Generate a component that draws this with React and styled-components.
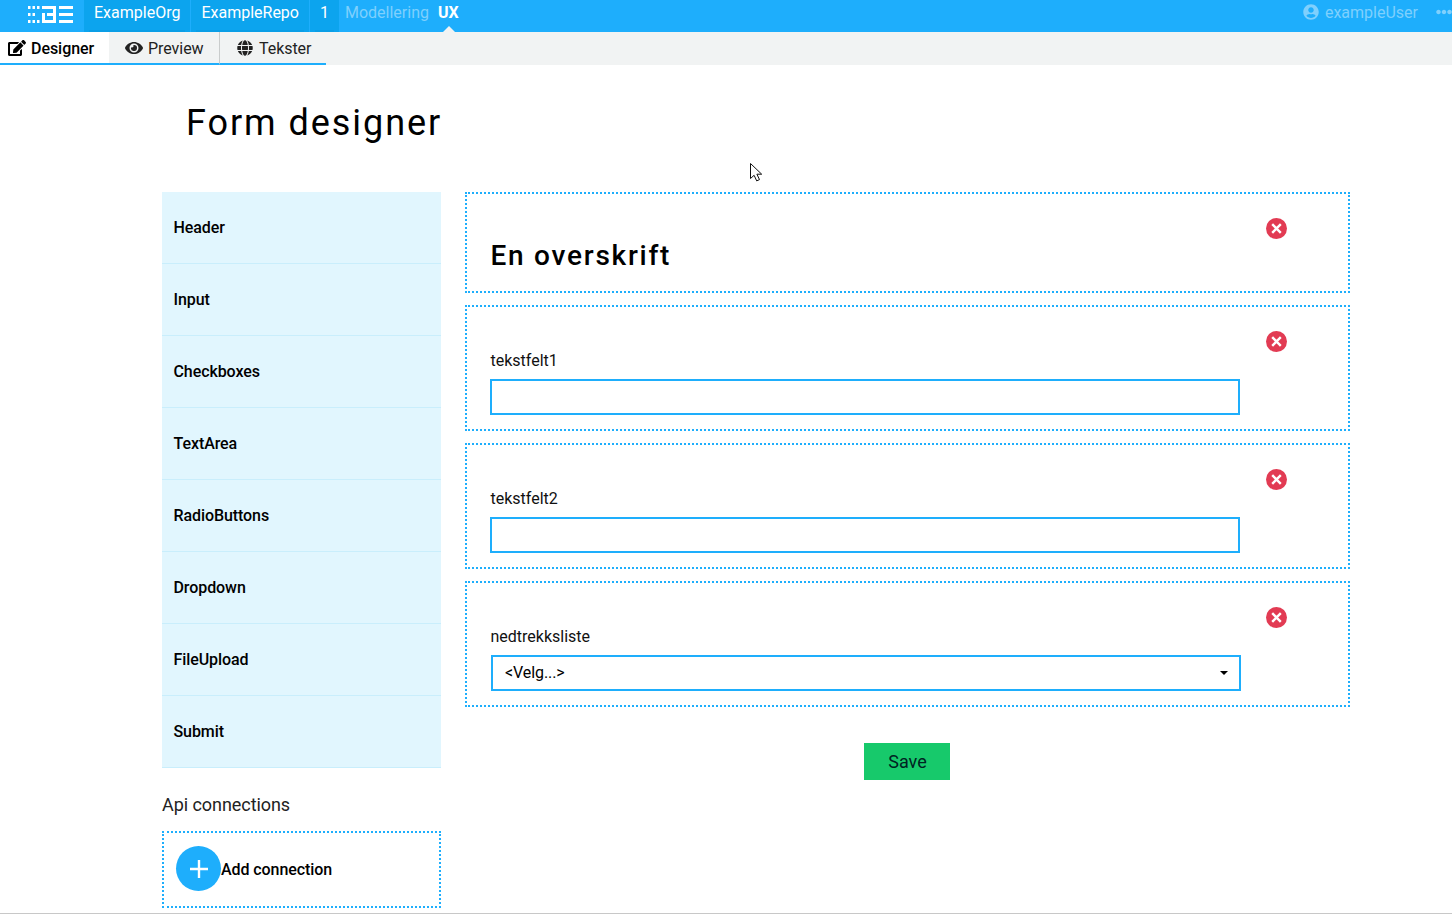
import React from "react"
import styled, { createGlobalStyle } from "styled-components"
import { FaEdit, FaEye, FaGlobe, FaUserCircle, FaEllipsisH } from "react-icons/fa"

const Global = createGlobalStyle`
  html, body { margin: 0; padding: 0; background: #fff; }
  body { font-family: Roboto, "Liberation Sans", sans-serif; color: #000; }
  * { box-sizing: border-box; }
`

const Page = styled.div`
  position: relative;
  height: 914px;
  overflow: hidden;
  border-bottom: 1px solid #c8c8c8;
`

const TopBar = styled.header`
  display: flex;
  align-items: stretch;
  height: 32px;
  background: #1eaefc;
  color: #fff;
  font-size: 16px;
  line-height: 26px;
`

const LogoWrap = styled.div`
  width: 84px;
  padding: 5px 0 0 27px;
`

const NavCrumb = styled.div`
  position: relative;
  padding: 0 10px;
  background: #0ca4ee;
  border-right: 1px solid #1eaefc;
  &::after {
    content: "";
    position: absolute;
    left: 5px;
    right: 5px;
    bottom: 0;
    height: 2px;
    background: #0a9ee6;
  }
`

const SubNav = styled.div`
  position: relative;
  margin-left: ${p => p.$gap}px;
  color: ${p => (p.$active ? "#fff" : "#7fd0fd")};
  font-weight: ${p => (p.$active ? 700 : 400)};
  ${p => p.$active && `
    &::after {
      content: "";
      position: absolute;
      left: 50%;
      bottom: 0;
      margin-left: -5px;
      border: 6px solid transparent;
      border-top: 0;
      border-bottom-color: #f1f3f3;
    }
  `}
`

const UserArea = styled.div`
  margin-left: auto;
  display: flex;
  align-items: flex-start;
  color: #7fd0fd;
  svg { flex: none; }
`

const UserIcon = styled(FaUserCircle)`
  margin: 4px 6px 0 0;
  font-size: 16px;
`

const MoreIcon = styled(FaEllipsisH)`
  margin: 4px 0 0 18px;
  font-size: 16px;
`

const TabBar = styled.nav`
  display: flex;
  height: 33px;
  background: #f1f3f3;
`

const Tab = styled.div`
  display: flex;
  align-items: center;
  gap: ${p => p.$gap}px;
  width: ${p => p.$width}px;
  padding: 1px 0 0 ${p => p.$left}px;
  font-size: 16px;
  letter-spacing: -0.05px;
  color: ${p => (p.$active ? "#000" : "#222")};
  font-weight: ${p => (p.$active ? 500 : 400)};
  background: ${p => (p.$active ? "#fff" : "transparent")};
  border-bottom: 2px solid #1eaefc;
  border-right: ${p => (p.$divider ? "1px solid #c9cccc" : "0")};
`

const Main = styled.main`
  padding: 0 0 0 162px;
`

const Title = styled.h1`
  margin: 0;
  padding: 35px 0 0 24px;
  height: 127px;
  font-size: 36px;
  line-height: 46px;
  font-weight: 400;
  letter-spacing: 1.95px;
`

const Columns = styled.div`
  display: grid;
  grid-template-columns: 279px 885px;
  gap: 24px;
  align-items: start;
`

const ToolList = styled.ul`
  margin: 0;
  padding: 0;
  list-style: none;
`

const ToolItem = styled.li`
  height: 72px;
  padding: 0 0 0 11.5px;
  display: flex;
  align-items: center;
  background: #e1f6fe;
  border-bottom: 1px solid #c9eefc;
  font-size: 16px;
  font-weight: 500;
  letter-spacing: -0.08px;
`

const ApiTitle = styled.h2`
  margin: 26px 0 16px;
  font-size: 18px;
  line-height: 21px;
  font-weight: 400;
  letter-spacing: -0.06px;
  color: #222;
`

const AddBox = styled.div`
  height: 77px;
  padding-left: 12px;
  display: flex;
  align-items: center;
  border: 2px dotted #1eaefc;
  font-size: 16px;
  font-weight: 500;
  letter-spacing: -0.08px;
`

const AddCircle = styled.span`
  width: 45px;
  height: 45px;
  margin-top: -2px;
  flex: none;
  display: flex;
  align-items: center;
  justify-content: center;
  border-radius: 50%;
  background: #1eaefc;
`

const Canvas = styled.div`
  display: flex;
  flex-direction: column;
  gap: 12px;
`

const DropZone = styled.section`
  display: grid;
  grid-template-columns: 750px 1fr;
  padding: 24px 0 ${p => p.$bottom}px 23px;
  border: 2px dotted #1eaefc;
`

const Heading = styled.h2`
  margin: 21px 0 0 0.5px;
  font-size: 28px;
  line-height: 34px;
  font-weight: 500;
  letter-spacing: 1.75px;
`

const Label = styled.label`
  display: block;
  margin: 18px 0 6px 0.5px;
  font-size: 16px;
  line-height: 24px;
  color: #111;
`

const TextInput = styled.input`
  display: block;
  width: 750px;
  height: 36px;
  border: 2px solid #1eaefc;
  border-radius: 0;
  outline: 0;
  background: #fff;
`

const SelectWrap = styled.div`
  position: relative;
  width: 750px;
  height: 36px;
  margin-left: 1px;
  &::after {
    content: "";
    position: absolute;
    right: 13px;
    top: 16px;
    border: 4px solid transparent;
    border-bottom: 0;
    border-top-color: #000;
  }
`

const Select = styled.select`
  display: block;
  width: 100%;
  height: 100%;
  padding: 0 0 2px 12px;
  appearance: none;
  border: 2px solid #1eaefc;
  border-radius: 0;
  outline: 0;
  background: #fff;
  color: #000;
  font-family: Roboto, "Liberation Sans", sans-serif;
  font-size: 16px;
  letter-spacing: -0.08px;
`

const DeleteButton = styled.button`
  width: 21px;
  height: 21px;
  margin-left: 26px;
  padding: 0;
  border: 0;
  background: none;
  line-height: 0;
`

const SaveRow = styled.div`
  display: flex;
  justify-content: center;
  padding: 24px 2px 0 0;
`

const SaveButton = styled.button`
  width: 86px;
  height: 37px;
  padding: 0 0 0 2px;
  border: 0;
  background: #17c96b;
  color: #022;
  font-family: Roboto, "Liberation Sans", sans-serif;
  font-size: 18px;
`

const Pointer = styled.svg`
  position: absolute;
  left: 749px;
  top: 162px;
`

const Logo = () => (
  <svg width="46" height="17" viewBox="0 0 46 17" fill="#fff">
    <rect x="1" y="0" width="2.5" height="3" />
    <rect x="5.5" y="0" width="2.5" height="3" />
    <rect x="10" y="0" width="2.5" height="3" />
    <rect x="1" y="7" width="2.5" height="3" />
    <rect x="5.5" y="7" width="2.5" height="3" />
    <rect x="1" y="14" width="2.5" height="3" />
    <rect x="5.5" y="14" width="2.5" height="3" />
    <rect x="10" y="14" width="2.5" height="3" />
    <path d="M15 0h14v17H15V7h3v7h8V3H15z" />
    <rect x="20" y="7" width="6" height="3" />
    <rect x="32" y="0" width="14" height="3" />
    <rect x="32" y="7" width="14" height="3" />
    <rect x="32" y="14" width="14" height="3" />
  </svg>
)

const DeleteIcon = () => (
  <svg width="21" height="21" viewBox="0 0 21 21">
    <circle cx="10.5" cy="10.5" r="10.5" fill="#e23b53" />
    <path d="M6.2 6.2l8.6 8.6M14.8 6.2l-8.6 8.6" stroke="#fff" strokeWidth="2.4" />
  </svg>
)

const tools = ["Header", "Input", "Checkboxes", "TextArea", "RadioButtons", "Dropdown", "FileUpload", "Submit"]

const App = () => (
  <Page>
    <Global />
    <TopBar>
      <LogoWrap><Logo /></LogoWrap>
      <NavCrumb>ExampleOrg</NavCrumb>
      <NavCrumb>ExampleRepo</NavCrumb>
      <NavCrumb>1</NavCrumb>
      <SubNav $gap={5}>Modellering</SubNav>
      <SubNav $gap={9} $active>UX</SubNav>
      <UserArea>
        <UserIcon />
        exampleUser
        <MoreIcon />
      </UserArea>
    </TopBar>
    <TabBar>
      <Tab $active $width={109} $left={8} $gap={5}><FaEdit size={18} />Designer</Tab>
      <Tab $width={111} $left={16} $gap={5} $divider><FaEye size={18} />Preview</Tab>
      <Tab $width={106} $left={17} $gap={6}><FaGlobe size={16} />Tekster</Tab>
    </TabBar>
    <Main>
      <Title>Form designer</Title>
      <Columns>
        <div>
          <ToolList>
            {tools.map(t => <ToolItem key={t}>{t}</ToolItem>)}
          </ToolList>
          <ApiTitle>Api connections</ApiTitle>
          <AddBox>
            <AddCircle>
              <svg width="20" height="20" viewBox="0 0 20 20">
                <path d="M10 1v18M1 10h18" stroke="#fff" strokeWidth="2.4" />
              </svg>
            </AddCircle>
            Add connection
          </AddBox>
        </div>
        <Canvas>
          <DropZone $bottom={18}>
            <Heading>En overskrift</Heading>
            <DeleteButton><DeleteIcon /></DeleteButton>
          </DropZone>
          <DropZone $bottom={14}>
            <div>
              <Label>tekstfelt1</Label>
              <TextInput />
            </div>
            <DeleteButton><DeleteIcon /></DeleteButton>
          </DropZone>
          <DropZone $bottom={14}>
            <div>
              <Label>tekstfelt2</Label>
              <TextInput />
            </div>
            <DeleteButton><DeleteIcon /></DeleteButton>
          </DropZone>
          <DropZone $bottom={14}>
            <div>
              <Label>nedtrekksliste</Label>
              <SelectWrap>
                <Select defaultValue="">
                  <option value="">{"<Velg...>"}</option>
                </Select>
              </SelectWrap>
            </div>
            <DeleteButton><DeleteIcon /></DeleteButton>
          </DropZone>
          <SaveRow>
            <SaveButton>Save</SaveButton>
          </SaveRow>
        </Canvas>
      </Columns>
    </Main>
    <Pointer width="15" height="21" viewBox="0 0 15 21">
      <path d="M1.5 1.5v15l3.6-3.2 2.6 5.6 2.8-1.3-2.6-5.4h4.8z" fill="#fff" stroke="#111" strokeWidth="1" />
    </Pointer>
  </Page>
)

export default App
